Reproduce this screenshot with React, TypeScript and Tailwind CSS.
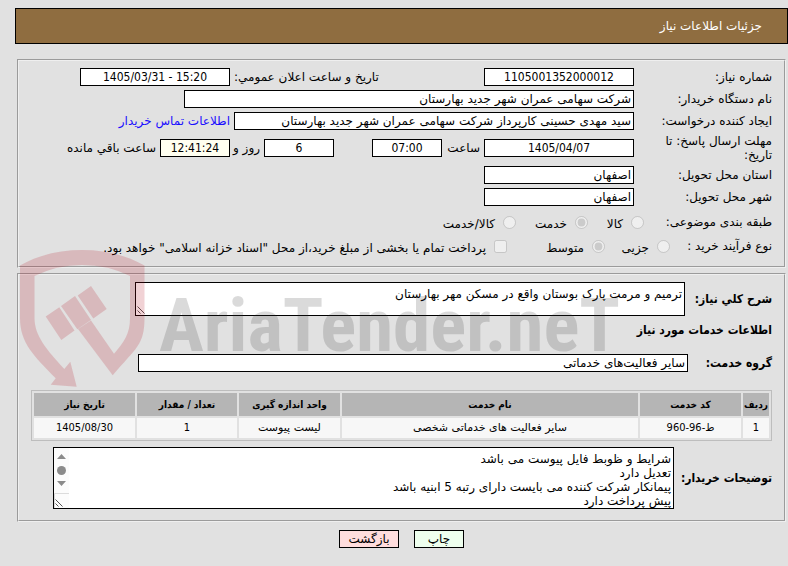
import { clsx } from 'clsx'
import type { ReactNode } from 'react'

const services = [
  {
    code: 'ط-96-960',
    name: 'سایر فعالیت های خدماتی شخصی',
    unit: 'لیست پیوست',
    amount: '1',
    date: '1405/08/30',
  },
]

const buyerNotes = `شرایط و ظوبط فایل پیوست می باشد
تعدیل دارد
پیمانکار شرکت کننده می بایست دارای رتبه 5 ابنیه باشد
پیش پرداخت دارد`

function Row({
  label,
  htmlFor,
  className,
  children,
}: {
  label: string
  htmlFor?: string
  className?: string
  children: ReactNode
}) {
  return (
    <div className={clsx('flex items-center', className)}>
      <label htmlFor={htmlFor} className="w-[138px] shrink-0 pe-5">
        {label}
      </label>
      {children}
    </div>
  )
}

function Field({
  id,
  value,
  className,
  label,
  numeric = false,
}: {
  id: string
  value: string
  className?: string
  label?: string
  numeric?: boolean
}) {
  return (
    <input
      id={id}
      readOnly
      value={value}
      aria-label={label}
      className={clsx(
        'h-[18px] shrink-0 border border-black px-0.5',
        numeric && "text-center font-['DejaVu_Sans_Condensed',sans-serif]",
        className
      )}
    />
  )
}

function Choice({
  type = 'radio',
  name,
  label,
  checked = false,
  className,
}: {
  type?: 'radio' | 'checkbox'
  name: string
  label: string
  checked?: boolean
  className?: string
}) {
  return (
    <label className={clsx('flex shrink-0 items-center gap-2 whitespace-nowrap', className)}>
      <input type={type} name={name} defaultChecked={checked} disabled className="size-[13px] shrink-0" />
      <span className="pt-1">{label}</span>
    </label>
  )
}

function ResizeGrip() {
  return (
    <svg className="absolute bottom-0.5 left-0.5 size-2" viewBox="0 0 8 8" stroke="#555" aria-hidden="true">
      <path d="M0.5 0.5L7.5 7.5M0.5 4.5L3.5 7.5" />
    </svg>
  )
}

function Watermark() {
  return (
    <svg className="pointer-events-none absolute top-0 left-0" width="640" height="400" aria-hidden="true">
      <g fill="#b40f1e" fillOpacity="0.19">
        <path d="M20 265.500C38 255 60 250 82 250C105 250 126 255 144.500 265.500V318C144.500 345 136 348 112.700 375.300L78 329L91 320.500L114 353.700C124 342 130 334 130 318V276Q108 265 82 265Q57 265 34.500 276V318C34.500 336 47 350 64.300 369L70.300 361.700L76.700 386.700L50.700 384.700L55.700 378.300C34 356 20 343 20 318Z" />
        <path d="M77.700 295.500L91 286L106.700 309L93.300 318.500ZM61 306L75 296L91 320L77.300 329.300ZM45.700 316.500L59.300 307.300L74.500 330.500L61.300 340Z" />
      </g>
      <text
        x="159"
        y="351"
        direction="ltr"
        className="font-['Roboto_Condensed','Liberation_Sans',sans-serif] text-[75px] font-bold"
        fill="#303030"
        fillOpacity="0.18"
      >
        AriaTender.neT
      </text>
    </svg>
  )
}

export default function App() {
  return (
    <main
      dir="rtl"
      className="relative min-h-screen bg-[#e1e1e1] pt-2 font-['DejaVu_Sans',sans-serif] text-[12px] leading-[14px] text-black"
    >
      <header className="ml-[15px] flex h-9 items-center border border-black bg-[#8f6d40] px-[25px] text-white">
        <h1>جزئیات اطلاعات نیاز</h1>
      </header>

      <div className="mt-[15px] mr-0.5 ml-[17px] flex flex-col gap-[5px]">
        <fieldset className="flex min-w-0 flex-col gap-1 px-3 pt-[7px] pb-3 [border:2px_groove_threedface]">
          <Row label="شماره نیاز:" htmlFor="number">
            <Field id="number" value="1105001352000012" numeric className="w-[150px] bg-white" />
            <label htmlFor="announced" className="w-[254px] shrink-0 pe-1 text-end">
              تاریخ و ساعت اعلان عمومي:
            </label>
            <Field
              id="announced"
              value="1405/03/31 - 15:20"
              numeric
              className="w-[150px] bg-white [direction:ltr]"
            />
          </Row>
          <Row label="نام دستگاه خریدار:" htmlFor="buyer">
            <Field id="buyer" value="شرکت سهامی عمران شهر جدید بهارستان" className="w-[450px] bg-white" />
          </Row>
          <Row label="ایجاد کننده درخواست:" htmlFor="creator">
            <Field
              id="creator"
              value="سید مهدی حسینی کارپرداز شرکت سهامی عمران شهر جدید بهارستان"
              className="w-[400px] bg-white"
            />
            <a href="#contact" className="ps-1 whitespace-nowrap text-[#1a0dff]">
              اطلاعات تماس خریدار
            </a>
          </Row>
          <Row label="مهلت ارسال پاسخ: تا تاریخ:" htmlFor="deadline" className="h-7">
            <Field id="deadline" value="1405/04/07" numeric className="w-[150px] bg-white" />
            <label htmlFor="hour" className="w-[42px] shrink-0 ps-1">
              ساعت
            </label>
            <Field id="hour" value="07:00" numeric className="w-[70px] bg-white" />
            <Field id="days" value="6" label="روز" numeric className="ms-[38px] w-[70px] bg-white" />
            <label htmlFor="days" className="w-[34px] shrink-0 ps-1 whitespace-nowrap">
              روز و
            </label>
            <Field id="remaining" value="12:41:24" numeric className="w-[70px] bg-[#fffff0]" />
            <label htmlFor="remaining" className="ps-1 whitespace-nowrap">
              ساعت باقي مانده
            </label>
          </Row>
          <Row label="استان محل تحویل:" htmlFor="province">
            <Field id="province" value="اصفهان" className="w-[150px] bg-white" />
          </Row>
          <Row label="شهر محل تحویل:" htmlFor="city">
            <Field id="city" value="اصفهان" className="w-[150px] bg-white" />
          </Row>
          <div role="radiogroup" aria-label="طبقه بندی موضوعی" className="flex h-6 items-center">
            <span className="w-32 shrink-0">طبقه بندی موضوعی:</span>
            <Choice name="subject" label="کالا" className="w-14" />
            <Choice name="subject" label="خدمت" checked className="w-[72px]" />
            <Choice name="subject" label="کالا/خدمت" />
          </div>
          <div role="radiogroup" aria-label="نوع فرآیند خرید" className="flex h-4 items-center">
            <span className="w-[102px] shrink-0">نوع فرآیند خرید :</span>
            <Choice name="process" label="جزیی" className="w-[65px]" />
            <Choice name="process" label="متوسط" checked className="w-[98px]" />
            <Choice
              type="checkbox"
              name="treasury"
              label={'پرداخت تمام یا بخشی از مبلغ خرید،از محل "اسناد خزانه اسلامی" خواهد بود.'}
            />
          </div>
        </fieldset>

        <fieldset className="min-w-0 px-3 pt-[7px] pb-[11px] [border:2px_groove_threedface]">
          <div className="flex items-center">
            <label
              htmlFor="summary"
              className="w-[87px] shrink-0 font-['DejaVu_Sans_Condensed',sans-serif] font-bold whitespace-nowrap"
            >
              شرح کلي نیاز:
            </label>
            <div className="relative h-[34px] w-[550px]">
              <textarea
                id="summary"
                readOnly
                value="ترمیم و مرمت پارک بوستان واقع در مسکن مهر بهارستان"
                className="size-full resize-none overflow-hidden border border-black bg-white px-0.5 py-1"
              />
              <ResizeGrip />
            </div>
          </div>
          <h2 className="mt-[7px] font-['DejaVu_Sans_Condensed',sans-serif] font-bold">اطلاعات خدمات مورد نیاز</h2>
          <div className="mt-[17px] flex items-center">
            <label
              htmlFor="group"
              className="w-[84px] shrink-0 font-['DejaVu_Sans_Condensed',sans-serif] font-bold whitespace-nowrap"
            >
              گروه خدمت:
            </label>
            <Field id="group" value="سایر فعالیت‌های خدماتی" className="w-[550px] bg-white" />
          </div>

          <table className="mt-[18px] w-full table-fixed border-separate border-spacing-[2px] border border-[#bdbdbd] text-center text-[11px]">
            <thead>
              <tr className="h-[23px] bg-[#b5b5b5] font-['DejaVu_Sans_Condensed',sans-serif] text-[10px]">
                <th className="w-[26px]">ردیف</th>
                <th className="w-[101px]">کد خدمت</th>
                <th>نام خدمت</th>
                <th className="w-[101px]">واحد اندازه گیری</th>
                <th className="w-[100px]">تعداد / مقدار</th>
                <th className="w-[101px]">تاریخ نیاز</th>
              </tr>
            </thead>
            <tbody>
              {services.map((service, i) => (
                <tr key={service.code} className="h-5 bg-[#f7f7f7]">
                  <td className="font-['DejaVu_Sans_Condensed',sans-serif]">{i + 1}</td>
                  <td className="font-['DejaVu_Sans_Condensed',sans-serif]">{service.code}</td>
                  <td>{service.name}</td>
                  <td>{service.unit}</td>
                  <td className="font-['DejaVu_Sans_Condensed',sans-serif]">{service.amount}</td>
                  <td className="font-['DejaVu_Sans_Condensed',sans-serif]">{service.date}</td>
                </tr>
              ))}
            </tbody>
          </table>

          <div className="mt-1.5 flex items-center">
            <label
              htmlFor="notes"
              className="w-[98px] shrink-0 font-['DejaVu_Sans_Condensed',sans-serif] font-bold whitespace-nowrap"
            >
              توضیحات خریدار:
            </label>
            <div className="relative h-[62px] w-[621px]">
              <textarea
                id="notes"
                readOnly
                value={buyerNotes}
                className="size-full resize-none overflow-hidden border border-black bg-white px-0.5 py-1"
              />
              {/* Scroll arrows, thumb and corner */}
              <svg className="absolute top-px left-px" width="15" height="60" fill="#8b8b8b" aria-hidden="true">
                <path d="M0 0H15V60H0Z" fill="#fcfcfc" />
                <path d="M3 11L7.500 6L12 11ZM3 33L7.500 38L12 33Z" />
                <circle cx="7.500" cy="22.500" r="4.500" />
                <path d="M0.500 60V45.500H15" fill="none" stroke="#dcdcdc" />
              </svg>
              <ResizeGrip />
            </div>
          </div>
        </fieldset>
      </div>

      <div className="mt-2 mr-0.5 ml-[17px] flex justify-center gap-[15px] pb-4">
        <button type="button" className="h-[18px] w-[50px] border border-black bg-[#eeffee]">
          چاپ
        </button>
        <button type="button" className="h-[18px] w-[60px] border border-black bg-[#ffdddd]">
          بازگشت
        </button>
      </div>

      <Watermark />
    </main>
  )
}
